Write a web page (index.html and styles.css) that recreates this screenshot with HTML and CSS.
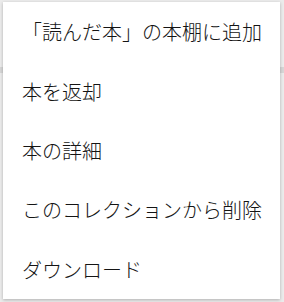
FILE: index.html
```html
<!DOCTYPE html>
<html lang="ja">
<head>
<meta charset="utf-8">
<link rel="stylesheet" href="styles.css">
</head>
<body>
<div class="backdrop-band"></div>
<ul class="menu">
  <li class="item">「読んだ本」の本棚に追加</li>
  <li class="item">本を返却</li>
  <li class="item">本の詳細</li>
  <li class="item">このコレクションから削除</li>
  <li class="item">ダウンロード</li>
</ul>
</body>
</html>
```
FILE: styles.css
```css
html, body {
  margin: 0;
  padding: 0;
}
body {
  width: 284px;
  height: 302px;
  background: #ebebeb;
  overflow: hidden;
  position: relative;
  font-family: "Noto Sans CJK JP", "Noto Sans", sans-serif;
}
.backdrop-band {
  position: absolute;
  left: 0;
  top: 67px;
  width: 284px;
  height: 6px;
  background: #d6d6d6;
}
.menu {
  position: relative;
  list-style: none;
  margin: 2px 3px 0 3px;
  padding: 0;
  width: 277px;
  height: 297px;
  background: #fff;
  box-shadow: 0 1px 3px rgba(0,0,0,0.25);
  display: flex;
  flex-direction: column;
}
.item {
  height: 60px;
  display: flex;
  align-items: center;
  padding-left: 19px;
  font-size: 20px;
  font-weight: 300;
  color: #141414;
  white-space: nowrap;
}
```
